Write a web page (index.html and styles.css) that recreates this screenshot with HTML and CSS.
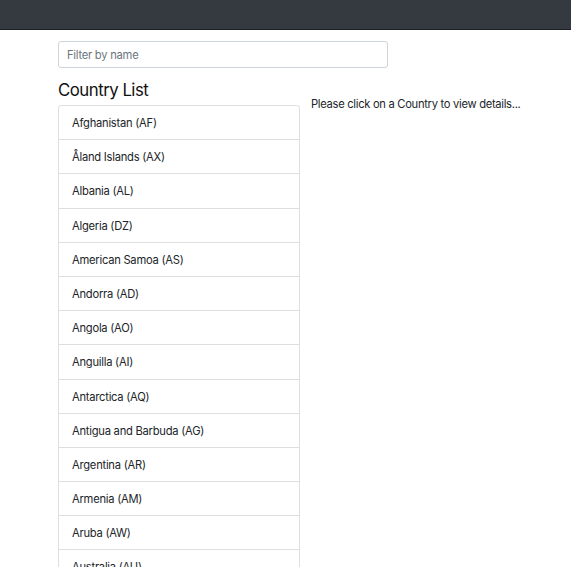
FILE: index.html
```html
<!DOCTYPE html>
<html>
<head>
<meta charset="utf-8">
<link rel="stylesheet" href="styles.css">
</head>
<body>
<nav class="navbar"></nav>
<main class="container">
  <input class="filter" type="text" placeholder="Filter by name">
  <div class="row">
    <div class="col-list">
      <h4 class="title">Country List</h4>
      <ul class="list-group">
        <li class="item">Afghanistan (AF)</li>
        <li class="item">Åland Islands (AX)</li>
        <li class="item">Albania (AL)</li>
        <li class="item">Algeria (DZ)</li>
        <li class="item">American Samoa (AS)</li>
        <li class="item">Andorra (AD)</li>
        <li class="item">Angola (AO)</li>
        <li class="item">Anguilla (AI)</li>
        <li class="item">Antarctica (AQ)</li>
        <li class="item">Antigua and Barbuda (AG)</li>
        <li class="item">Argentina (AR)</li>
        <li class="item">Armenia (AM)</li>
        <li class="item">Aruba (AW)</li>
        <li class="item">Australia (AU)</li>
        <li class="item">Austria (AT)</li>
      </ul>
    </div>
    <div class="col-detail">
      <p class="hint">Please click on a Country to view details...</p>
    </div>
  </div>
</main>
</body>
</html>
```
FILE: styles.css
```css
* { box-sizing: border-box; }
html, body { margin: 0; padding: 0; }
body {
  font-family: Inter, "Liberation Sans", sans-serif;
  font-size: 11.2px;
  letter-spacing: -0.25px;
  color: #212529;
  background: #fff;
  overflow: hidden;
}
.navbar {
  height: 30px;
  background: #343a40;
  border-bottom: 1px solid #1d2024;
}
.container {
  padding: 11px 0 0 58px;
}
.filter {
  display: block;
  width: 330px;
  height: 27px;
  margin: 0;
  padding: 1px 8px 0;
  border: 1px solid #ced4da;
  border-radius: 3px;
  font-family: Inter, "Liberation Sans", sans-serif;
  font-size: 11.2px;
  letter-spacing: -0.25px;
  color: #495057;
}
.filter::placeholder { color: #6c757d; }
.row {
  display: flex;
  gap: 11px;
  margin-top: 12px;
}
.col-list { width: 242px; }
.title {
  margin: 0 0 5px;
  font-size: 16.8px;
  font-weight: 400;
  letter-spacing: -0.5px;
  line-height: 20px;
  color: #111;
}
.list-group {
  list-style: none;
  margin: 0;
  padding: 0;
  border: 1px solid rgba(0,0,0,0.125);
  border-radius: 3px;
}
.item {
  height: 34.2px;
  line-height: 35px;
  padding: 0 13px;
  border-bottom: 1px solid rgba(0,0,0,0.125);
}
.col-detail { padding-top: 16px; }
.hint { margin: 0; line-height: 17px; letter-spacing: -0.3px; }
```
